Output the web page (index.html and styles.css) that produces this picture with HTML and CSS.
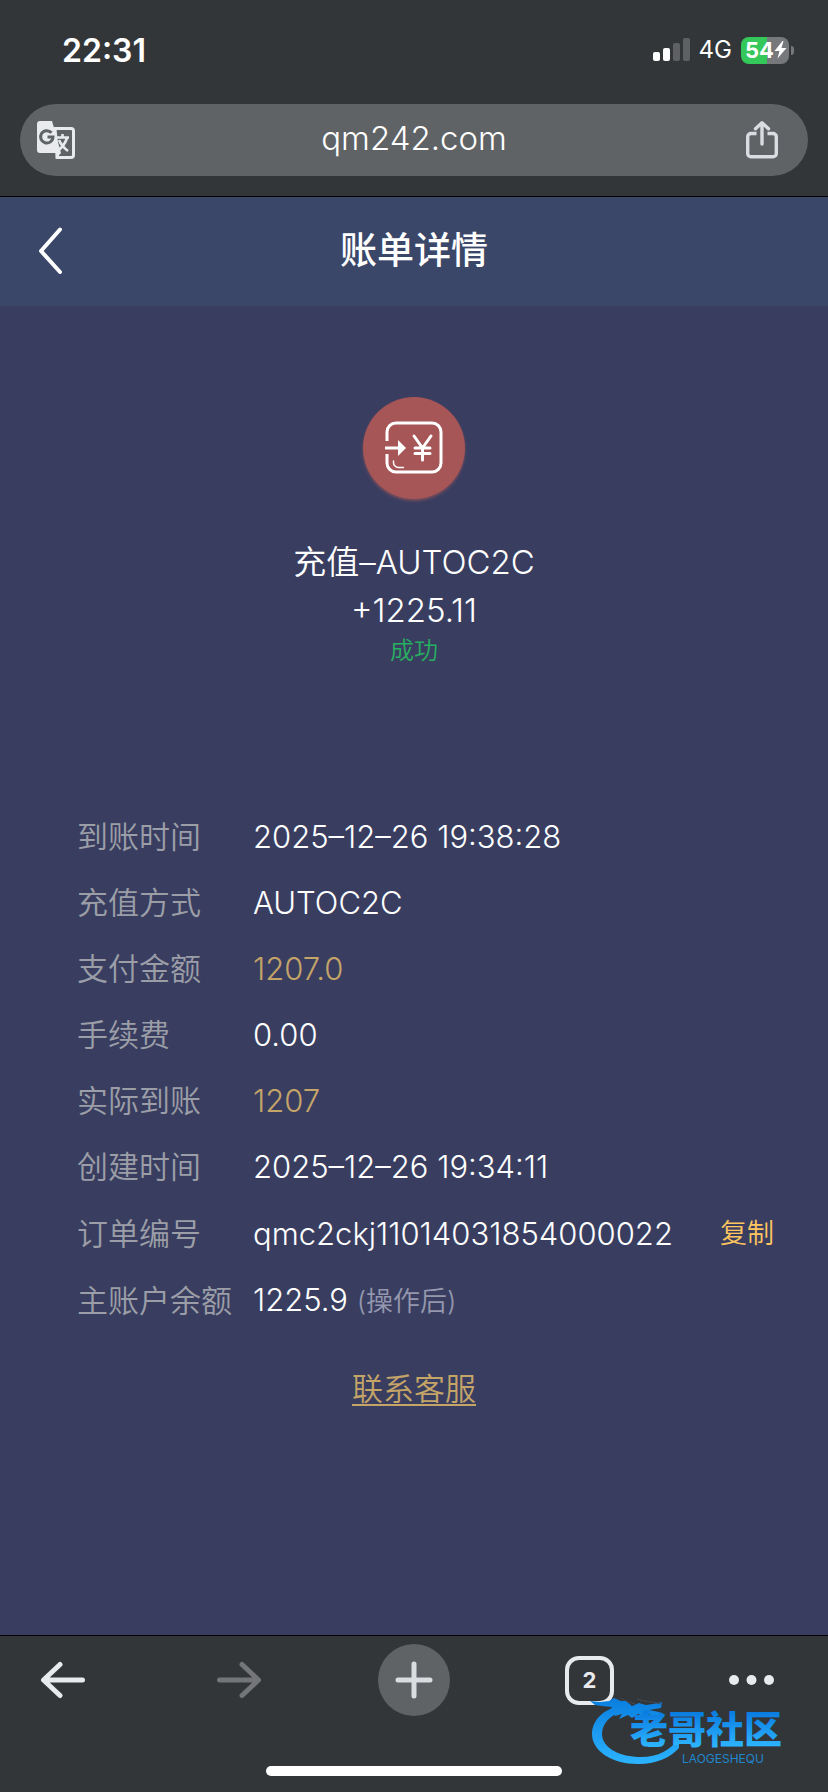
FILE: index.html
```html
<!DOCTYPE html>
<html lang="zh-CN">
<head>
<meta charset="utf-8">
<meta name="viewport" content="width=device-width, initial-scale=1">
<title>账单详情</title>
<link rel="stylesheet" href="styles.css">
</head>
<body>
<div class="status">
  <time class="clock">22:31</time>
  <div class="indicators">
    <svg class="signal" width="38" height="24" viewBox="0 0 38 24" aria-hidden="true">
      <rect x="0" y="14" width="7" height="9" rx="2" fill="#fff"/>
      <rect x="10" y="10" width="7" height="13" rx="2" fill="#fff"/>
      <rect x="20" y="5" width="7" height="18" rx="2" fill="#5f6063"/>
      <rect x="30" y="0" width="7" height="23" rx="2" fill="#5f6063"/>
    </svg>
    <span class="network">4G</span>
    <div class="battery">
      <span class="battery-level">54</span>
      <svg width="13" height="18" viewBox="0 0 13 18" aria-hidden="true"><path d="M8.500 0 0.500 10H5.500L3.500 17.500 12.500 7H7.500L9.500 0Z" fill="#fff"/></svg>
    </div>
    <span class="battery-tip"></span>
  </div>
</div>
<div class="address">
  <button class="icon-button translate" aria-label="翻译">
    <svg width="38" height="38" viewBox="0 0 38 38">
      <path d="M18 7.500H34a2.500 2.500 0 0 1 2.500 2.500V34a2.500 2.500 0 0 1-2.500 2.500H20.500Z" fill="none" stroke="#e8eaed" stroke-width="3"/>
      <path d="M3 0H15L18.500 12 24 32 18.500 38V32H3a3 3 0 0 1-3-3V3a3 3 0 0 1 3-3Z" fill="#e8eaed"/>
      <path d="M14.500 11.800A6.200 6.200 0 1 0 16 16H10.500" fill="none" stroke="#5f6366" stroke-width="3"/>
      <path d="M19 16.500H32M25.500 13V16.500M30 17C28 23 25 27 20 30M22 19C24 24 27 27 31 30" fill="none" stroke="#e8eaed" stroke-width="2.600"/>
    </svg>
  </button>
  <span class="host">qm242.com</span>
  <button class="icon-button share" aria-label="分享">
    <svg width="32" height="38" viewBox="0 0 32 38" fill="none" stroke="#dadce2" stroke-width="3.400" stroke-linecap="round" stroke-linejoin="round">
      <path d="M10.500 12.500H5A3.300 3.300 0 0 0 1.700 15.800V32.500A3.300 3.300 0 0 0 5 35.800H27A3.300 3.300 0 0 0 30.300 32.500V15.800A3.300 3.300 0 0 0 27 12.500H21.500" stroke-linecap="butt"/>
      <path d="M16 23V2M9.500 7.800 16 1.800 22.500 7.800"/>
    </svg>
  </button>
</div>
<header class="titlebar">
  <button class="back" aria-label="返回">
    <svg width="24" height="48" viewBox="0 0 24 48" fill="none" stroke="#fff" stroke-width="4" stroke-linecap="round" stroke-linejoin="round"><path d="M22 2.500 3 24 22 45"/></svg>
  </button>
  <h1 class="title">账单详情</h1>
</header>
<main class="page">
  <section class="summary">
    <div class="badge">
      <svg width="58" height="54" viewBox="0 0 58 54" fill="none" stroke="#fff" stroke-width="3" stroke-linecap="round">
        <path d="M2 20V11A9 9 0 0 1 11 2H47A9 9 0 0 1 56 11V42A9 9 0 0 1 47 51H11A9 9 0 0 1 2 42V33" stroke-linecap="butt"/>
        <path d="M0 27H16" stroke-linecap="butt"/>
        <path d="M13 19 21 27 13 35V27Z" fill="#fff" stroke="none"/>
        <path d="M29 15 37.500 27 46 15M37.500 27V39M30 27H45M30 32.500H45"/>
        <path d="M8.500 40V41.500A5 5 0 0 0 13.500 46.500H18.500" stroke-width="1.500"/>
      </svg>
    </div>
    <p class="kind">充值–AUTOC2C</p>
    <p class="amount">+1225.11</p>
    <p class="state">成功</p>
  </section>
  <dl class="details">
    <div class="row"><dt>到账时间</dt><dd>2025–12–26 19:38:28</dd></div>
    <div class="row"><dt>充值方式</dt><dd>AUTOC2C</dd></div>
    <div class="row"><dt>支付金额</dt><dd class="gold">1207.0</dd></div>
    <div class="row"><dt>手续费</dt><dd>0.00</dd></div>
    <div class="row"><dt>实际到账</dt><dd class="gold">1207</dd></div>
    <div class="row"><dt>创建时间</dt><dd>2025–12–26 19:34:11</dd></div>
    <div class="row row-action"><dt>订单编号</dt><dd class="order">qmc2ckj11014031854000022<button class="copy">复制</button></dd></div>
    <div class="row"><dt>主账户余额</dt><dd>1225.9 <span class="note">(操作后)</span></dd></div>
  </dl>
  <a class="support" href="#support">联系客服</a>
</main>
<footer class="toolbar">
  <nav class="tools">
    <button class="tool" aria-label="后退"><svg width="46" height="38" viewBox="0 0 46 38" fill="none" stroke="#e8eaed" stroke-width="5" stroke-linecap="round" stroke-linejoin="round"><path d="M42.500 19H4M20 3.500 3.500 19 20 34.500"/></svg></button>
    <button class="tool" aria-label="前进" disabled><svg width="46" height="38" viewBox="0 0 46 38" fill="none" stroke="#747578" stroke-width="5" stroke-linecap="round" stroke-linejoin="round"><path d="M3.500 19H42M26 3.500 42.500 19 26 34.500"/></svg></button>
    <button class="tool add" aria-label="新标签页"><svg width="38" height="38" viewBox="0 0 38 38" fill="none" stroke="#dadce0" stroke-width="5" stroke-linecap="round"><path d="M19 3V35M3 19H35"/></svg></button>
    <button class="tool" aria-label="标签页"><span class="tabs">2</span></button>
    <button class="tool more" aria-label="更多"><svg width="46" height="10" viewBox="0 0 46 10" fill="#e8eaed"><circle cx="5" cy="5" r="5"/><circle cx="22.500" cy="5" r="5"/><circle cx="40" cy="5" r="5"/></svg></button>
  </nav>
  <div class="home-bar"></div>
  <svg class="watermark" width="230" height="70" viewBox="-2 0 230 70" role="img" aria-label="老哥社区 LAOGESHEQU">
    <defs>
      <linearGradient id="blue" gradientUnits="userSpaceOnUse" x1="0" y1="2" x2="0" y2="66"><stop offset="0" stop-color="#0a7fe0"/><stop offset="1" stop-color="#2cb4ff"/></linearGradient>
      <linearGradient id="ink" gradientUnits="userSpaceOnUse" x1="0" y1="14" x2="0" y2="48"><stop offset="0" stop-color="#0a7be0"/><stop offset="1" stop-color="#2cb4ff"/></linearGradient>
    </defs>
    <path d="M24 9C9 13 0 24 0 36C0 53 20 66 46 66C64 66 78 60 87 50V40C79 52 66 59 49 59C28 59 10 50 10 36C10 25 19 16 33 13Z" fill="url(#blue)"/>
    <path d="M-2 3 8 4 17 3 22 0 29 3 34 3 40 8 47 5 54 7 61 6 70 4 69 10 63 11 57 12 67 14 69 16 65 19 56 16 52 18 46 16 40 20 36 17 27 21 30 16 23 18 22 13 17 14 20 9 10 8 3 7Z" fill="url(#blue)"/>
    <path d="M25 -3C31 3 38 4 43 6M45 1C52 4 60 3 69 6" fill="none" stroke="#444b52" stroke-width="1"/>
    <text class="mark-name" x="38" y="45" fill="url(#ink)">老哥社区</text>
    <text class="mark-latin" x="90" y="65">LAOGESHEQU</text>
  </svg>
</footer>
</body>
</html>
```
FILE: styles.css
```css
* { box-sizing: border-box; }
body {
  margin: 0;
  min-height: 100vh;
  display: flex;
  flex-direction: column;
  background: #333639;
  color: #fff;
  font-family: Inter, "Noto Sans CJK SC", sans-serif;
}
button {
  display: flex;
  align-items: center;
  justify-content: center;
  padding: 0;
  border: 0;
  background: none;
  color: inherit;
  font: inherit;
}
svg { display: block; flex: none; }
h1, p, dl, dd { margin: 0; }

.status {
  height: 104px;
  padding: 0 34px 4px 62px;
  display: flex;
  align-items: center;
  justify-content: space-between;
}
.clock { font-size: 32px; font-weight: 600; }
.indicators { display: flex; align-items: center; }
.network { margin: 0 9px 0 8px; font-size: 24px; line-height: 28px; }
.battery {
  width: 48px;
  height: 27px;
  padding: 0 2px 0 4px;
  display: flex;
  align-items: center;
  justify-content: space-between;
  border-radius: 8px;
  background: linear-gradient(to right, #34c759 54%, #77787b 54%);
}
.battery-level { font-size: 22px; line-height: 27px; font-weight: 700; }
.battery-tip { width: 3px; height: 9px; margin-left: 2px; border-radius: 0 4px 4px 0; background: #77787b; }

.address {
  height: 72px;
  margin: 0 20px 20px;
  padding: 0 30px 0 17px;
  display: grid;
  grid-template-columns: 38px 1fr 32px;
  align-items: center;
  border-radius: 36px;
  background: #5f6366;
}
.host { padding: 0 0 4px 7px; font-size: 33px; line-height: 40px; font-weight: 350; text-align: center; }

.titlebar {
  height: 110px;
  padding: 0 38px 2px;
  display: grid;
  grid-template-columns: 1fr auto 1fr;
  align-items: center;
  border-top: 1px solid #000;
  background: #3b4769;
}
.back { justify-self: start; }
.title { font-size: 37px; line-height: 48px; font-weight: 500; }

.page {
  flex: 1;
  display: flex;
  flex-direction: column;
  background: #393e61;
  font-weight: 350;
}
.summary {
  padding-top: 91px;
  display: flex;
  flex-direction: column;
  align-items: center;
}
.badge {
  width: 102px;
  height: 102px;
  margin-bottom: 39px;
  display: flex;
  align-items: center;
  justify-content: center;
  border-radius: 50%;
  background: #a65656;
  box-shadow: 0 2px 3px #a6565699;
}
.kind, .amount { font-size: 33px; line-height: 48px; }
.state { font-size: 24px; line-height: 34px; color: #27ae60; }

.details { padding: 136px 54px 0 77px; }
.row {
  height: 66px;
  display: grid;
  grid-template-columns: 176px 1fr;
  align-items: center;
  font-size: 31px;
  line-height: 44px;
}
.row-action { height: 68px; }
dt { color: #9c9ea7; white-space: nowrap; }
.gold { color: #c5a468; }
.order { display: flex; align-items: center; justify-content: space-between; }
.copy { font-size: 27px; line-height: 40px; color: #ffc65f; }
.note { font-size: 27px; color: #9497ad; }
.support {
  align-self: center;
  margin-top: 33px;
  font-size: 31px;
  line-height: 44px;
  color: #c5a468;
  text-underline-offset: 4px;
  text-decoration-thickness: 2px;
}

.toolbar {
  position: relative;
  height: 157px;
  padding-top: 8px;
  border-top: 1px solid #000;
}
.tools { padding: 0 27px; display: flex; justify-content: space-between; }
.tool { width: 72px; height: 72px; }
.add { border-radius: 50%; background: #5f6366; }
.more { justify-content: flex-start; }
.tabs {
  width: 49px;
  height: 49px;
  display: flex;
  align-items: center;
  justify-content: center;
  border: 4px solid #e8eaed;
  border-radius: 14px;
  color: #e8eaed;
  font-size: 22px;
  font-weight: 700;
}
.home-bar { width: 296px; height: 10px; margin: 50px auto 0; border-radius: 5px; background: #fff; }
.watermark { position: absolute; right: 8px; bottom: 24px; }
.mark-name { font-family: "Noto Sans CJK SC", sans-serif; font-size: 38px; font-weight: 900; }
.mark-latin { font-size: 12px; font-weight: 400; fill: #2087cc; }
```
